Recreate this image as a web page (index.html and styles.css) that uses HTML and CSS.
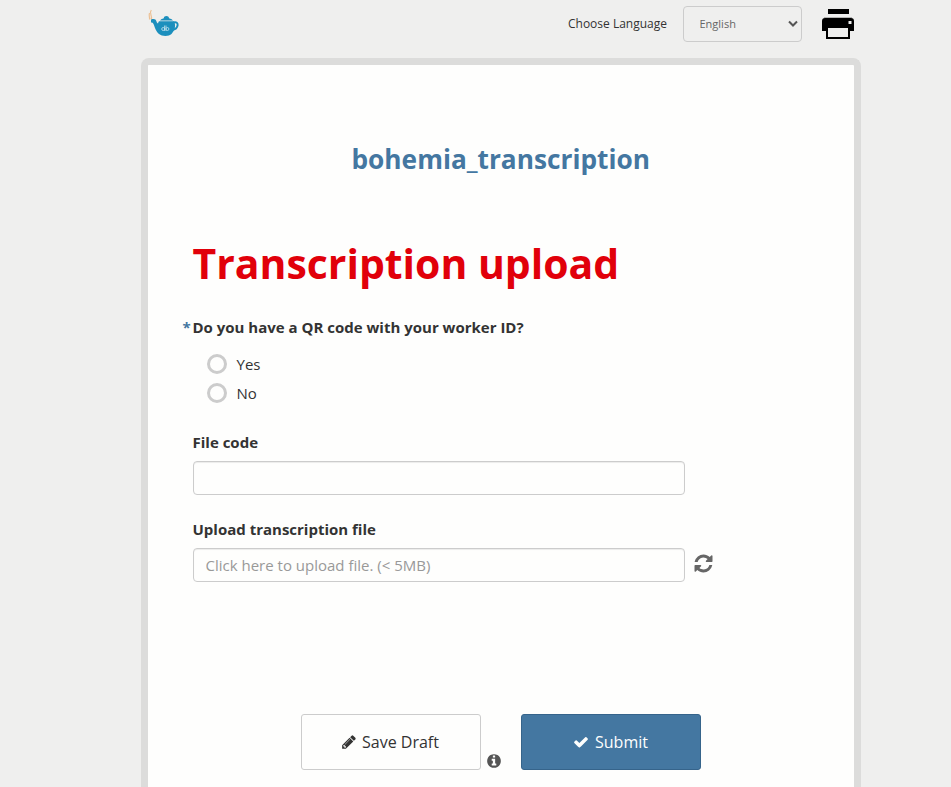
FILE: index.html
```html
<!DOCTYPE html>
<html lang="en">
<head>
<meta charset="utf-8">
<title>bohemia_transcription</title>
<link rel="stylesheet" href="styles.css">
</head>
<body>
<main class="main">
  <header class="form-header">
    <svg class="logo" viewBox="0 0 32 32" aria-hidden="true">
      <path fill="none" stroke="#1c8fbd" stroke-width="2" d="M25.500 14.500c6-2 5.500 6.500-1.500 7.500"/>
      <path fill="#1c8fbd" d="M3 11h2.500c3.500 0 2.500 3.500 4.500 4.500 .2-1 .5-1.700 1-2.200h15c2 3.700 1.300 8.500-2.500 12.700-2.500 2.600-9.500 2.600-12.500 0-2-1.700-3-3.500-4-6-1.200-3.500-1.500-5.500-4-5.500zM12 12.600c1-1.300 2-1.800 3.800-2.300 0-3 5.200-3 5.200 0 1.800.5 3 1 4 2.300z"/>
      <path fill="none" stroke="#ecc094" stroke-width="1.200" d="M3.300 2c-3 4 2 5.500-.3 9.500M1.500 5c-1 3 .5 4 0 6.500"/>
      <path fill="none" stroke="#c5e2ed" stroke-width=".8" d="M16.600 17.500v5.500M18 17.500v5.500"/>
      <circle cx="15.200" cy="21" r="1.500" fill="none" stroke="#c5e2ed" stroke-width=".8"/>
      <circle cx="19.400" cy="21" r="1.500" fill="none" stroke="#c5e2ed" stroke-width=".8"/>
    </svg>
    <label class="lang-label" for="lang">Choose Language</label>
    <div class="lang-select">
      <select id="lang"><option>English</option></select>
      <svg class="chevron" viewBox="0 0 10 8" aria-hidden="true"><path d="M1 1.500l4 4 4-4"/></svg>
    </div>
    <button class="print" type="button" aria-label="Print">
      <svg viewBox="0 0 32 30">
        <path d="M6 0h21v5H6z"/>
        <path fill="#b4b4b3" d="M2 8h28v1H2z"/>
        <path fill-rule="evenodd" d="M3 9h26q3 0 3 3v10h-4v8H4v-8H0V12q0-3 3-3zM6 19v9h20v-9zM26.500 12v3h3v-3z"/>
      </svg>
    </button>
  </header>

  <form class="paper">
    <h1 class="form-title">bohemia_transcription</h1>
    <h2 class="note">Transcription upload</h2>

    <fieldset class="question choices">
      <legend class="label"><span class="required">*</span>Do you have a QR code with your worker ID?</legend>
      <label class="option"><input type="radio" name="qr"><span>Yes</span></label>
      <label class="option"><input type="radio" name="qr"><span>No</span></label>
    </fieldset>

    <div class="question">
      <label class="label" for="code">File code</label>
      <input class="field" id="code" type="text">
    </div>

    <div class="question">
      <label class="label" for="upload">Upload transcription file</label>
      <div class="upload-row">
        <input class="field" id="upload" type="text" placeholder="Click here to upload file. (&lt; 5MB)" readonly>
        <svg class="refresh" viewBox="0 0 1792 1792" aria-hidden="true"><path d="M1639 1056q0 5-1 7-64 268-268 434.500t-478 166.500q-146 0-282.500-55t-243.500-157l-129 129q-19 19-45 19t-45-19-19-45v-448q0-26 19-45t45-19h448q26 0 45 19t19 45-19 45l-137 137q71 66 161 102t187 36q134 0 250-65t186-179q11-17 53-117 8-23 30-23h192q13 0 22.500 9.500t9.500 22.500zm25-800v448q0 26-19 45t-45 19h-448q-26 0-45-19t-19-45 19-45l138-138q-148-137-349-137-134 0-250 65t-186 179q-11 17-53 117-8 23-30 23h-199q-13 0-22.500-9.500t-9.500-22.500v-7q65-268 270-434.500t480-166.500q146 0 284 55.500t245 156.500l130-129q19-19 45-19t45 19 19 45z"/></svg>
      </div>
    </div>

    <div class="actions">
      <button class="btn btn-draft" type="button">
        <svg viewBox="0 0 1792 1792" aria-hidden="true"><path d="M491 1536l91-91-235-235-91 91v107h128v128h107zm523-928q0-22-22-22-10 0-17 7l-542 542q-7 7-7 17 0 22 22 22 10 0 17-7l542-542q7-7 7-17zm-54-192l416 416-832 832h-416v-416zm683 96q0 53-37 90l-166 166-416-416 166-165q36-38 90-38 53 0 91 38l235 234q37 39 37 91z"/></svg>
        <span>Save Draft</span>
      </button>
      <svg class="info" viewBox="0 0 1792 1792" aria-hidden="true"><path d="M1152 1376v-160q0-14-9-23t-23-9h-96v-512q0-14-9-23t-23-9h-320q-14 0-23 9t-9 23v160q0 14 9 23t23 9h96v320h-96q-14 0-23 9t-9 23v160q0 14 9 23t23 9h448q14 0 23-9t9-23zm-128-896v-160q0-14-9-23t-23-9h-192q-14 0-23 9t-9 23v160q0 14 9 23t23 9h192q14 0 23-9t9-23zm640 416q0 209-103 385.500t-279.500 279.500-385.500 103-385.500-103-279.500-279.500-103-385.500 103-385.500 279.500-279.500 385.500-103 385.500 103 279.500 279.500 103 385.500z"/></svg>
      <button class="btn btn-primary" type="button">
        <svg viewBox="0 0 1792 1792" aria-hidden="true"><path d="M1671 566q0 40-28 68l-724 724-136 136q-28 28-68 28t-68-28l-136-136-362-362q-28-28-28-68t28-68l136-136q28-28 68-28t68 28l294 295 656-657q28-28 68-28t68 28l136 136q28 28 28 68z"/></svg>
        <span>Submit</span>
      </button>
    </div>
  </form>
</main>
</body>
</html>
```
FILE: styles.css
```css
* { box-sizing: border-box; }

body {
  margin: 0;
  background: #efefee;
  color: #333;
  font: 15px/21px "Open Sans", sans-serif;
}

button, input, select { font-family: inherit; }

.main { width: 720px; margin-left: 141px; }

.form-header {
  display: flex;
  align-items: center;
  height: 58px;
  padding: 0 7px 10px;
}

.logo { width: 32px; height: 32px; margin-right: auto; }

.lang-label { margin: -2px 16px 0 0; font-size: 12px; }

.lang-select { position: relative; margin-right: 20px; }

.lang-select select {
  display: block;
  width: 119px;
  height: 36px;
  padding: 0 15.5px 2px;
  border: 1px solid #ccc;
  border-radius: 4px;
  background: transparent;
  color: #666;
  font-size: 11px;
  appearance: none;
}

.chevron {
  position: absolute;
  right: 4px;
  top: 14px;
  width: 10px;
  height: 8px;
  fill: none;
  stroke: #555;
  stroke-width: 2;
}

.print { padding: 0; border: 0; background: none; }
.print svg { display: block; width: 32px; height: 30px; }

.paper {
  height: 729px;
  padding: 77px 38px 0 44.5px;
  border: 7px solid #dcdcdb;
  border-bottom: 0;
  border-radius: 8px 8px 0 0;
  background: #fefefd;
}

.form-title {
  margin: 0 -37.5px 0 -44.5px;
  color: #4477a1;
  font-size: 26.25px;
  line-height: 34px;
  text-align: center;
}

.note {
  margin: 59px 0 26px;
  color: #e1000a;
  font-size: 40.95px;
  line-height: 56px;
}

.question { margin: 0 0 24px; padding: 0; border: 0; }

.label {
  display: block;
  margin-bottom: 8px;
  padding: 0;
  font-weight: 700;
}

.choices .label { margin-bottom: 12px; }

.required {
  display: inline-block;
  width: 10px;
  margin-left: -10px;
  color: #4477a1;
}

.option {
  display: flex;
  align-items: center;
  gap: 9.5px;
  height: 29px;
  padding-left: 14.5px;
}

.option input {
  width: 20px;
  height: 20px;
  margin: 0 0 2px;
  border: 3px solid #ccc;
  border-radius: 50%;
  appearance: none;
}

.field {
  display: block;
  width: 492px;
  height: 34px;
  padding: 0 12px;
  border: 1px solid #ccc;
  border-radius: 4px;
  background: #fefefd;
  box-shadow: inset 0 1px 1px rgba(0, 0, 0, .075);
  font-size: 15px;
}

.field::placeholder { color: #999; opacity: 1; }

.upload-row { display: flex; align-items: center; gap: 8.5px; }
.refresh { width: 21px; height: 21px; margin-bottom: 3px; fill: #666; }

.actions {
  display: flex;
  align-items: flex-end;
  margin: 132px 0 0 108.5px;
}

.btn {
  display: flex;
  align-items: center;
  justify-content: center;
  gap: 6px;
  width: 180px;
  height: 56px;
  padding: 0;
  border: 1px solid #ccc;
  border-radius: 3px;
  background: #fefefd;
  color: #333;
  font-size: 16px;
}

.btn svg { width: 16px; height: 16px; fill: currentColor; }

.btn-draft { gap: 5.5px; padding-right: 2.5px; }

.btn-primary {
  padding-right: 1px;
  border-color: #36648b;
  background: #4477a1;
  color: #fefefd;
}

.info { width: 16px; height: 16px; margin: 0 19.5px 1px 4.5px; fill: #555; }
```
